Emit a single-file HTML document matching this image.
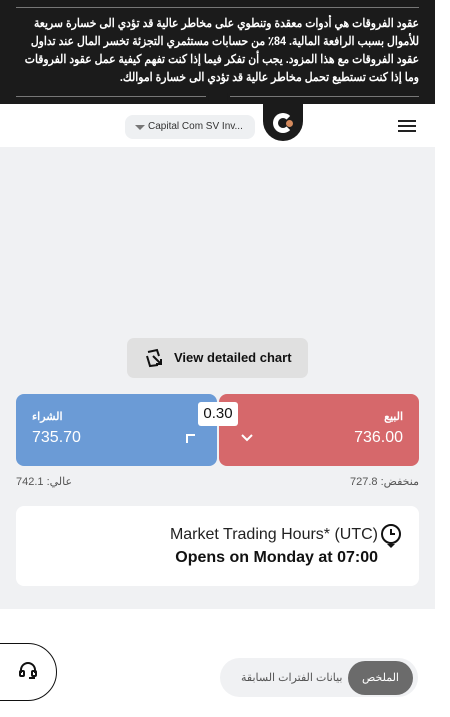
<!DOCTYPE html>
<html><head><meta charset="utf-8"><style>
*{margin:0;padding:0;box-sizing:border-box}
body{width:450px;height:717px;background:#fff;font-family:"Liberation Sans","Noto Sans CJK SC",sans-serif;position:relative;overflow:hidden}
.abs{position:absolute}
.banner{left:0;top:0;width:435px;height:104px;background:#1b1b1b;overflow:hidden}
.line{height:1px;background:#777}
.btxt{right:16px;top:14px;color:#fff;font-weight:bold;font-size:12px;line-height:18px;text-align:right;direction:rtl;white-space:nowrap;transform:scaleX(0.9);transform-origin:right top}
</style></head><body>
<div class="abs banner">
<div class="abs line" style="left:16px;top:7px;width:403px"></div>
<div class="abs btxt">عقود الفروقات هي أدوات معقدة وتنطوي على مخاطر عالية قد تؤدي الى خسارة سريعة<br>للأموال بسبب الرافعة المالية. 84٪ من حسابات مستثمري التجزئة تخسر المال عند تداول<br>عقود الفروقات مع هذا المزود. يجب أن تفكر فيما إذا كنت تفهم كيفية عمل عقود الفروقات<br>وما إذا كنت تستطيع تحمل مخاطر عالية قد تؤدي الى خسارة اموالك.</div>
<div class="abs line" style="left:16px;top:96px;width:190px"></div>
<div class="abs line" style="left:230px;top:96px;width:189px"></div>
</div>
<div class="abs" style="left:208px;top:87px;width:20px;height:20px;border-radius:50%;background:#1b1b1b"></div>
<div class="abs" style="left:0;top:104px;width:435px;height:43px;background:#fff"></div>
<div class="abs" style="left:125px;top:115px;width:130px;height:24px;background:#eef0f2;border-radius:8px;font-size:10px;color:#333;line-height:24px;padding-left:23px">Capital Com SV Inv...</div>
<div class="abs" style="left:135px;top:125px;width:0;height:0;border-left:5px solid transparent;border-right:5px solid transparent;border-top:5px solid #777"></div>
<div class="abs" style="left:263px;top:104px;width:40px;height:37px;background:#1b1b1b;border-radius:0 0 20px 20px"></div>
<div class="abs" style="left:273px;top:113px;width:20px;height:20px;border-radius:50%;border:5px solid #fff;border-right-color:transparent"></div>
<div class="abs" style="left:286px;top:120px;width:7px;height:7px;border-radius:50%;background:#d58a5d"></div>
<div class="abs" style="left:398px;top:120px;width:18px;height:2px;background:#222;box-shadow:0 5px 0 #222,0 10px 0 #222"></div>
<div class="abs" style="left:0;top:147px;width:435px;height:462px;background:#f0f1f3"></div>
<div class="abs" style="left:127px;top:338px;width:181px;height:40px;background:#e0e0e0;border-radius:7px;font-weight:bold;font-size:13px;line-height:40px;padding-left:47px;color:#111">View detailed chart</div>
<svg class="abs" style="left:144px;top:347px" width="22" height="22" viewBox="0 0 22 22" fill="none" stroke="#111" stroke-width="2"><path d="M4 5l9-2 2 6M14 18l-8 1-3-10M9 9l8 8M17 12v5h-5"/></svg>
<div class="abs" style="left:16px;top:394px;width:201px;height:72px;background:#6b9bd6;border-radius:8px"></div>
<div class="abs" style="left:219px;top:394px;width:200px;height:72px;background:#d6686b;border-radius:8px"></div>
<div class="abs" style="left:32px;top:410px;color:#fff;font-size:11px;font-weight:bold">الشراء</div>
<div class="abs" style="left:32px;top:429px;color:#fff;font-size:16px">735.70</div>
<div class="abs" style="left:186px;top:434px;width:9px;height:9px;border-top:2px solid #fff;border-left:2px solid #fff"></div>
<div class="abs" style="right:47px;top:410px;color:#fff;font-size:11px;font-weight:bold">البيع</div>
<div class="abs" style="right:47px;top:429px;color:#fff;font-size:16px">736.00</div>
<svg class="abs" style="left:240px;top:433px" width="14" height="10"><path d="M2 2l5 5 5-5" stroke="#fff" stroke-width="2" fill="none"/></svg>
<div class="abs" style="left:198px;top:402px;width:40px;height:24px;background:#fff;border-radius:3px;font-size:15px;text-align:center;line-height:24px;color:#111">0.30</div>
<div class="abs" style="left:16px;top:475px;font-size:11px;color:#555">742.1 :عالي</div>
<div class="abs" style="right:31px;top:475px;font-size:11px;color:#555">منخفض: 727.8</div>
<div class="abs" style="left:16px;top:506px;width:403px;height:80px;background:#fff;border-radius:8px"></div>
<div class="abs" style="right:72px;top:526px;font-size:16px;color:#222">Market Trading Hours* (UTC)</div>
<div class="abs" style="right:72px;top:549px;font-size:16px;font-weight:bold;color:#111">Opens on Monday at 07:00</div>
<svg class="abs" style="left:380px;top:523px" width="24" height="28"><circle cx="11" cy="11" r="9" stroke="#111" stroke-width="2" fill="none"/><path d="M11 6v5h4" stroke="#111" stroke-width="2" fill="none"/><path d="M7 21h8l-4 4z" fill="#111"/></svg>
<div class="abs" style="left:-30px;top:643px;width:87px;height:58px;border:1px solid #111;border-radius:29px"></div>
<svg class="abs" style="left:17px;top:660px" width="22" height="22" viewBox="0 0 22 22" fill="none" stroke="#111" stroke-width="2"><path d="M4 13V10a7 7 0 0 1 14 0v3"/><rect x="3" y="11" width="4" height="5" rx="1"/><rect x="15" y="11" width="4" height="5" rx="1"/><path d="M17 16v2h-5"/></svg>
<div class="abs" style="left:220px;top:658px;width:198px;height:39px;background:#f0f1f3;border-radius:20px"></div>
<div class="abs" style="left:348px;top:661px;width:65px;height:34px;background:#6b6b6b;border-radius:17px;color:#fff;font-size:11px;text-align:center;line-height:34px">الملخص</div>
<div class="abs" style="left:241px;top:671px;font-size:11px;color:#555">بيانات الفترات السابقة</div>
</body></html>
